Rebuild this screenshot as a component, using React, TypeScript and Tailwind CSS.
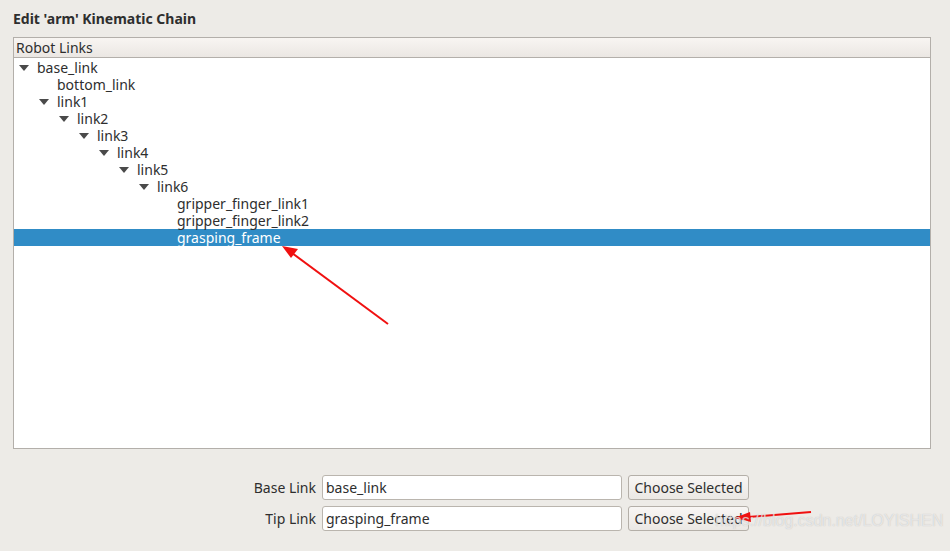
import React from "react";

type Node = { name: string; level: number; open?: boolean; selected?: boolean };

const nodes: Node[] = [
  { name: "base_link", level: 0, open: true },
  { name: "bottom_link", level: 1 },
  { name: "link1", level: 1, open: true },
  { name: "link2", level: 2, open: true },
  { name: "link3", level: 3, open: true },
  { name: "link4", level: 4, open: true },
  { name: "link5", level: 5, open: true },
  { name: "link6", level: 6, open: true },
  { name: "gripper_finger_link1", level: 7 },
  { name: "gripper_finger_link2", level: 7 },
  { name: "grasping_frame", level: 7, selected: true },
];

const indents = ["pl-[4px]", "pl-[24px]", "pl-[44px]", "pl-[64px]", "pl-[84px]", "pl-[104px]", "pl-[124px]", "pl-[144px]"];

function TreeRow({ node }: { node: Node }) {
  return (
    <div
      className={`flex h-[17px] items-center ${indents[node.level]} ${
        node.selected ? "bg-[#308cc6] text-white" : "text-[#2e2e2e]"
      }`}
    >
      <span className="flex w-[19px] justify-start">
        {node.open && (
          <svg width="10" height="6" viewBox="0 0 10 6" className="ml-px">
            <path d="M0 0 L10 0 L5 6 Z" fill="#4a4a4a" />
          </svg>
        )}
      </span>
      <span className="leading-none">{node.name}</span>
    </div>
  );
}

function FormRow({ label, value }: { label: string; value: string }) {
  return (
    <div className="flex items-center">
      <span className="w-[322px] pr-[6px] text-right text-[#2e2e2e]">{label}</span>
      <div className="flex h-[25px] w-[300px] items-center rounded-[3px] border border-[#bab5ae] bg-white px-[3px] text-[#2e2e2e]">
        {value}
      </div>
      <button className="ml-[6px] h-[25px] w-[121px] rounded-[3px] border border-[#b4afa8] bg-gradient-to-b from-[#f8f6f4] to-[#ebe8e4] text-[#2e2e2e]">
        Choose Selected
      </button>
    </div>
  );
}

export default function App() {
  return (
    <div
      className="relative h-[551px] w-[950px] overflow-hidden bg-[#edebe7] text-[14px]"
      style={{ fontFamily: '"Noto Sans", "Open Sans", sans-serif' }}
    >
      <div className="px-[13px] pt-[9px]">
        <h1 className="h-[20px] font-bold leading-[20px] text-[#2e2e2e]">Edit 'arm' Kinematic Chain</h1>
        <div className="mt-[8px] h-[412px] w-[918px] border border-[#b3afaa] bg-white">
          <div className="flex h-[20px] items-center border-b border-[#b3afaa] bg-gradient-to-b from-[#f8f5f2] to-[#ebe7e3] pl-[2px] text-[#2e2e2e]">
            Robot Links
          </div>
          <div className="pt-[1px]">
            {nodes.map((n) => (
              <TreeRow key={n.name} node={n} />
            ))}
          </div>
        </div>
      </div>

      <div className="mt-[26px] flex flex-col gap-[6px]">
        <FormRow label="Base Link" value="base_link" />
        <FormRow label="Tip Link" value="grasping_frame" />
      </div>

      <svg className="pointer-events-none absolute left-0 top-0" width="950" height="551">
        <line x1="388" y1="324" x2="292" y2="253" stroke="#f01010" strokeWidth="2" />
        <path d="M282 246 L298 249 L291 258 Z" fill="#f01010" />
        <line x1="811" y1="512" x2="748" y2="517" stroke="#f01010" strokeWidth="2" />
        <path d="M734 518 L750 512 L751 522 Z" fill="#f01010" />
      </svg>

      <div
        className="pointer-events-none absolute left-[715px] top-[509px] text-[16px] text-white/60"
        style={{ fontFamily: '"Liberation Sans", sans-serif', textShadow: "0 0 1px rgba(150,150,150,0.6)" }}
      >
        https://blog.csdn.net/LOYISHEN
      </div>
    </div>
  );
}
